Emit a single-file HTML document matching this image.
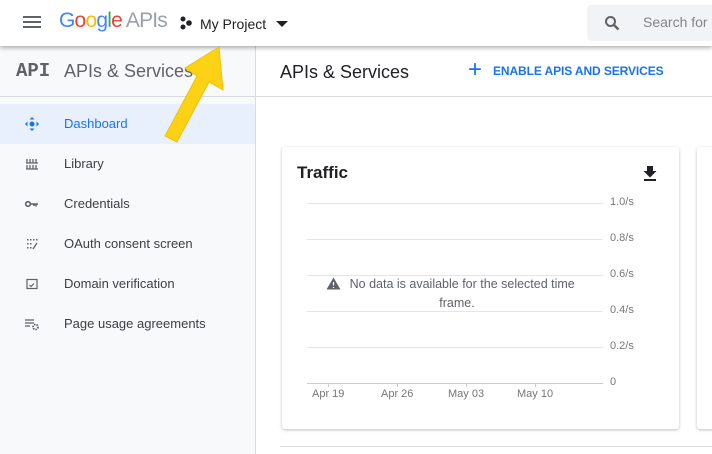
<!DOCTYPE html>
<html><head><style>
*{margin:0;padding:0;box-sizing:border-box}
body{width:712px;height:454px;overflow:hidden;background:#fff;font-family:"Liberation Sans",Arial,sans-serif;position:relative}
.hdr{position:absolute;left:0;top:0;width:712px;height:46px;background:#fff;box-shadow:0 2px 4px rgba(0,0,0,.3);z-index:3}
.side{position:absolute;left:0;top:46px;width:256px;height:408px;background:#f8f9fa;border-right:1px solid #dadce0}
.sub{position:absolute;left:0;top:0;width:256px;height:51px;border-bottom:1px solid #dadce0}
.item{position:absolute;left:0;width:255px;height:40px;font-size:13px;color:#3c4043;line-height:40px;padding-left:64px}
.ico{position:absolute;left:24px;top:12px;width:16px;height:16px}
.main{position:absolute;left:256px;top:46px;width:456px;height:51px;border-bottom:1px solid #dadce0}
.card{position:absolute;left:282px;top:147px;width:397px;height:282px;background:#fff;border-radius:3px;box-shadow:0 1px 3px rgba(0,0,0,.25)}
.gl{position:absolute;left:25px;width:296px;height:1px;background:#e6e6e6}
.yl{position:absolute;left:328px;font-size:11px;color:#777}
.xl{position:absolute;font-size:11px;color:#777;top:241px}
</style></head><body>
<div class="hdr">
<div style="position:absolute;left:23px;top:16px;width:18px;height:2px;background:#5f6368;box-shadow:0 5px 0 #5f6368,0 10px 0 #5f6368"></div>
<div style="position:absolute;left:59px;top:9px;font-size:21px;letter-spacing:-0.8px"><span style="color:#4285f4">G</span><span style="color:#ea4335">o</span><span style="color:#fbbc05">o</span><span style="color:#4285f4">g</span><span style="color:#34a853">l</span><span style="color:#ea4335">e</span><span style="color:#9aa0a6"> APIs</span></div>
<svg style="position:absolute;left:179px;top:16px" width="14" height="14"><circle cx="4" cy="3" r="2.5" fill="#202124"/><circle cx="4" cy="11" r="2.5" fill="#202124"/><circle cx="10" cy="7" r="2.8" fill="#202124"/></svg>
<div style="position:absolute;left:200px;top:16px;font-size:14px;color:#202124">My Project</div>
<div style="position:absolute;left:276px;top:21px;border-left:6px solid transparent;border-right:6px solid transparent;border-top:6px solid #202124"></div>
<div style="position:absolute;left:587px;top:5px;width:130px;height:36px;background:#f1f3f4;border-radius:4px"></div>
<svg style="position:absolute;left:604px;top:15px" width="16" height="16"><circle cx="6.5" cy="6.5" r="4.5" stroke="#5f6368" stroke-width="2" fill="none"/><path d="M10 10l4.5 4.5" stroke="#5f6368" stroke-width="2.4"/></svg>
<div style="position:absolute;left:643px;top:14px;font-size:14px;color:#80868b">Search for</div>
</div>
<div class="side">
<div class="sub"><div style="position:absolute;left:16px;top:14px;font-family:'Liberation Mono',monospace;font-weight:bold;font-size:19px;color:#5f6368">API</div><div style="position:absolute;left:64px;top:15px;font-size:18px;color:#5f6368">APIs &amp; Services</div></div>
<div class="item" style="top:58px;background:#e8f0fe;color:#1a73e8"><svg class="ico" viewBox="0 0 16 16"><circle cx="8" cy="8" r="2.5" fill="#1a73e8"/><path d="M8 1l-2.5 2.5h5zM8 15l-2.5-2.5h5zM1 8l2.5-2.5v5zM15 8l-2.5-2.5v5z" fill="#1a73e8"/></svg>Dashboard</div>
<div class="item" style="top:98px"><svg class="ico" viewBox="0 0 16 16"><path d="M3 3v4M6 3v4M9 3v4M12 3v4M2 7h12M3 9v4M6 9v4M9 9v4M12 9v4M2 13h12" stroke="#5f6368" stroke-width="1.3"/></svg>Library</div>
<div class="item" style="top:138px"><svg class="ico" viewBox="0 0 16 16"><circle cx="4" cy="8" r="2.3" stroke="#5f6368" stroke-width="1.6" fill="none"/><path d="M6 8h8M12 8v2.5M10 8v2" stroke="#5f6368" stroke-width="1.6"/></svg>Credentials</div>
<div class="item" style="top:178px"><svg class="ico" viewBox="0 0 16 16" fill="#5f6368"><rect x="3" y="3" width="1.5" height="1.5"/><rect x="6" y="3" width="1.5" height="1.5"/><rect x="9" y="3" width="1.5" height="1.5"/><rect x="12" y="3" width="1.5" height="1.5"/><rect x="3" y="7" width="1.5" height="1.5"/><rect x="6" y="7" width="1.5" height="1.5"/><rect x="3" y="11" width="1.5" height="1.5"/><rect x="6" y="11" width="1.5" height="1.5"/><path d="M9 13l4-6" stroke="#5f6368" stroke-width="1.3"/></svg>OAuth consent screen</div>
<div class="item" style="top:218px"><svg class="ico" viewBox="0 0 16 16"><rect x="3" y="3.5" width="10" height="9" stroke="#5f6368" stroke-width="1.2" fill="none"/><path d="M5.5 9l1.5 1.5 3-3" stroke="#5f6368" stroke-width="1.2" fill="none"/></svg>Domain verification</div>
<div class="item" style="top:258px"><svg class="ico" viewBox="0 0 16 16"><path d="M1 4h9M1 7h9M1 10h5" stroke="#5f6368" stroke-width="1.3"/><circle cx="11.5" cy="11" r="2.5" stroke="#5f6368" stroke-width="1.8" fill="none" stroke-dasharray="1.5 1"/></svg>Page usage agreements</div>
</div>
<div class="main">
<div style="position:absolute;left:24px;top:16px;font-size:18px;color:#202124">APIs &amp; Services</div>
<div style="position:absolute;left:212px;top:10px;font-size:24px;color:#1a73e8;font-weight:300">+</div>
<div style="position:absolute;left:237px;top:18px;font-size:12px;color:#1a73e8;font-weight:bold;letter-spacing:-0.1px">ENABLE APIS AND SERVICES</div>
</div>
<div class="card">
<div style="position:absolute;left:15px;top:16px;font-size:17px;font-weight:bold;color:#202124">Traffic</div>
<svg style="position:absolute;left:361px;top:18px" width="14" height="16"><path d="M4 1h6v5h3.5L7 12.5 0.5 6H4z M1 14h12v2H1z" fill="#202124"/></svg>
<div class="gl" style="top:56px"></div><div class="gl" style="top:92px"></div><div class="gl" style="top:128px"></div><div class="gl" style="top:164px"></div><div class="gl" style="top:200px"></div><div class="gl" style="top:236px;background:#ccc"></div>
<div class="yl" style="top:49px">1.0/s</div><div class="yl" style="top:85px">0.8/s</div><div class="yl" style="top:121px">0.6/s</div><div class="yl" style="top:157px">0.4/s</div><div class="yl" style="top:193px">0.2/s</div><div class="yl" style="top:229px">0</div>
<div style="position:absolute;left:46px;top:236px;width:1px;height:4px;background:#ccc"></div><div style="position:absolute;left:115px;top:236px;width:1px;height:4px;background:#ccc"></div><div style="position:absolute;left:184px;top:236px;width:1px;height:4px;background:#ccc"></div><div style="position:absolute;left:253px;top:236px;width:1px;height:4px;background:#ccc"></div>
<div class="xl" style="left:30px">Apr 19</div><div class="xl" style="left:99px">Apr 26</div><div class="xl" style="left:166px">May 03</div><div class="xl" style="left:235px">May 10</div>
<svg style="position:absolute;left:44px;top:130px" width="15" height="13"><path d="M7.5 0.5L14.5 12.5H0.5z" fill="#5f6368"/><path d="M7.5 5v3.5M7.5 10v1" stroke="#fff" stroke-width="1.2"/></svg>
<div style="position:absolute;top:128px;width:250px;font-size:12.5px;color:#5f6368;text-align:center;line-height:19px;left:50px">&nbsp;&nbsp;&nbsp;No data is available for the selected time frame.</div>
</div>
<div style="position:absolute;left:697px;top:147px;width:30px;height:282px;background:#fff;border-radius:3px;box-shadow:0 1px 3px rgba(0,0,0,.25)"></div>
<div style="position:absolute;left:280px;top:446px;width:432px;height:1px;background:#dadce0"></div>
<svg style="position:absolute;left:0;top:0;z-index:5" width="712" height="454"><path d="M219 47L185 68L197 76L165 136L177 142L209 82L223 90Z" fill="#fcd116" stroke="#f2c200" stroke-width="1"/></svg>
</body></html>
